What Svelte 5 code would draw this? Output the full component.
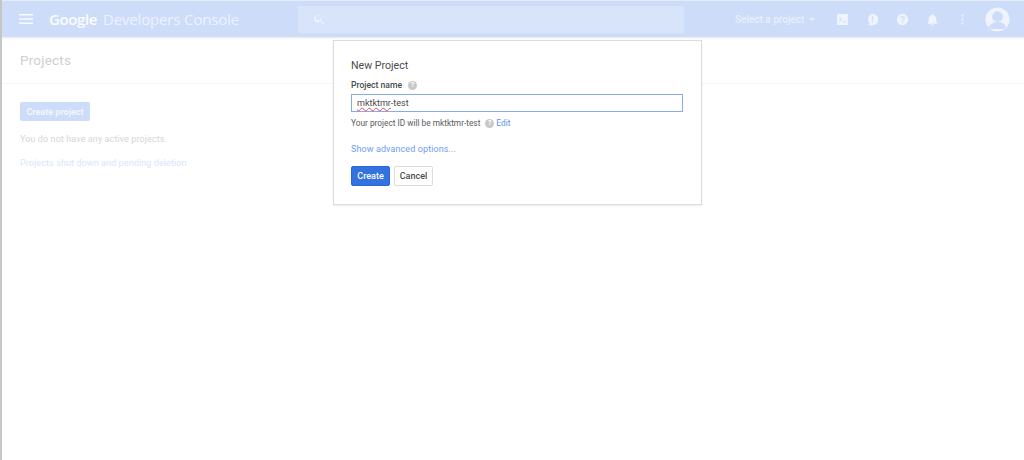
<script>
  const actions = ['terminal', 'feedback', 'help', 'bell', 'more'];
</script>

<div class="page">
  <header class="bar">
    <svg class="menu" viewBox="0 0 14 10" aria-hidden="true"><path d="M0 0h14v1.5H0zM0 4.200h14v1.500H0zM0 8.500h14V10H0z" /></svg>
    <div class="brand"><span class="google">Google</span><span class="product">Developers Console</span></div>
    <div class="search">
      <svg viewBox="0 0 24 24" aria-hidden="true"><path d="M15.500 14h-.8l-.3-.3A6.500 6.500 0 1 0 14 14.400l.3.3v.8l5 5 1.500-1.500-5-5zm-6 0a4.500 4.500 0 1 1 0-9 4.500 4.500 0 0 1 0 9z" /></svg>
    </div>
    <div class="picker">Select a project<span class="caret"></span></div>
    <div class="actions">
      {#each actions as a}
        <svg class="action" viewBox="0 0 24 24" aria-hidden="true">
          {#if a === 'terminal'}
            <path fill-rule="evenodd" d="M2 2h20v20H2zM6 9.500l3.500 2.500L6 14.500V16.500l6-4.500-6-4.500zM12.500 15v2h6v-2z" />
          {:else if a === 'feedback'}
            <path fill-rule="evenodd" d="M12 1.500a10.500 10.500 0 0 1 0 21H4.500l2-3.500A10.500 10.500 0 0 1 12 1.500zM10.700 6v8h2.600V6zM10.700 15.500v2.600h2.600v-2.600z" />
          {:else if a === 'help'}
            <path fill-rule="evenodd" d="M12 1.500a10.500 10.500 0 1 1 0 21 10.500 10.500 0 0 1 0-21zM10.800 16v2.400h2.400V16zM12 5.500a4.300 4.300 0 0 0-4.300 4.300h2.300a2 2 0 1 1 4 0c0 2-3.200 1.900-3.200 5.200h2.400c0-2.400 3.100-2.700 3.100-5.200A4.300 4.300 0 0 0 12 5.500z" />
          {:else if a === 'bell'}
            <path d="M12 23a2.200 2.200 0 0 0 2.200-2.200H9.800A2.200 2.200 0 0 0 12 23zm7-6.500v-5.500c0-3.400-2.200-6.100-5.500-6.800V3.500a1.500 1.500 0 0 0-3 0v.7C7.200 4.900 5 7.600 5 11v5.500l-2.500 2.500v1h19v-1z" />
          {:else}
            <path d="M10.300 3h3.400v3.400h-3.400zM10.300 10.300h3.400v3.400h-3.400zM10.300 17.600h3.400V21h-3.400z" />
          {/if}
        </svg>
      {/each}
    </div>
    <svg class="avatar" viewBox="0 0 26 26" aria-hidden="true">
      <circle cx="13" cy="13" r="12.500" fill="#eef3fd" />
      <circle cx="13" cy="10" r="5.500" fill="#cddcf8" />
      <path d="M4 21c1.500-4 5-5.500 9-5.500s7.500 1.500 9 5.500l-2 2H6z" fill="#cddcf8" />
    </svg>
  </header>

  <div class="title"><h1>Projects</h1></div>

  <main class="content">
    <button class="create-project">Create project</button>
    <p class="none">You do not have any active projects.</p>
    <a class="pending" href="#top">Projects shut down and pending deletion</a>
  </main>

  <section class="dialog">
    <h2>New Project</h2>
    <div class="label"><b>Project name</b><span class="hint">?</span></div>
    <div class="input"><span class="squiggle">mktktmr</span>-test</div>
    <div class="id">Your project ID will be mktktmr-test<span class="hint second">?</span><a href="#top">Edit</a></div>
    <a class="advanced" href="#top">Show advanced options...</a>
    <div class="buttons">
      <button class="primary">Create</button>
      <button class="cancel">Cancel</button>
    </div>
  </section>
</div>

<style>
  :global(body) {
    margin: 0;
    background: #fff;
  }
  .page {
    position: relative;
    box-sizing: border-box;
    width: 1024px;
    height: 460px;
    overflow: hidden;
    padding-top: 1px;
    background: linear-gradient(#e6eefc 1px, #fff 1px);
    border-left: 2px solid #c6c6c6;
    font-family: "Roboto", "Liberation Sans", sans-serif;
  }
  .bar {
    display: flex;
    align-items: center;
    height: 36px;
    background: #cddcf8;
    box-shadow: 0 1px 2px rgba(0, 0, 0, 0.1);
  }
  .menu {
    width: 14px;
    height: 10px;
    margin-left: 17px;
    fill: #f8faff;
  }
  .brand {
    display: flex;
    gap: 6px;
    margin-left: 16px;
    width: 249px;
    font-family: "Open Sans", sans-serif;
    font-size: 15px;
    white-space: nowrap;
  }
  .google {
    color: #fafcff;
    font-weight: 600;
    letter-spacing: -0.4px;
  }
  .product {
    color: #edf2fd;
    letter-spacing: -0.15px;
  }
  .search {
    display: flex;
    align-items: center;
    width: 386px;
    height: 27px;
    background: #d8e4fa;
  }
  .search svg {
    width: 13px;
    height: 13px;
    margin-left: 15px;
    fill: #f1f5fe;
  }
  .picker {
    display: flex;
    align-items: center;
    margin-left: 51px;
    width: 94px;
    color: #e8effc;
    font-size: 10px;
    font-weight: 500;
    white-space: nowrap;
  }
  .caret {
    margin-left: 5px;
    border: 3px solid transparent;
    border-top: 3px solid #e8effc;
    border-bottom: 0;
  }
  .actions {
    display: flex;
    gap: 17px;
    margin-left: 7px;
  }
  .action {
    width: 13px;
    height: 13px;
    fill: #f0f4fe;
  }
  .avatar {
    width: 25px;
    height: 25px;
    margin-left: 16px;
  }
  .title {
    box-sizing: border-box;
    height: 47px;
    padding: 16px 0 0 18px;
    border-bottom: 1px solid #f4f4f4;
  }
  h1 {
    margin: 0;
    color: #cfcfcf;
    font-size: 13.500px;
    font-weight: 400;
    line-height: 14px;
    letter-spacing: 0.2px;
  }
  .content {
    display: flex;
    flex-direction: column;
    align-items: flex-start;
    padding: 18px 18px;
  }
  .create-project {
    box-sizing: border-box;
    width: 70px;
    height: 19px;
    padding: 0;
    border: 0;
    border-radius: 2px;
    background: #cddcf8;
    color: #f2f6fe;
    font: 700 9px "Roboto", sans-serif;
  }
  .none {
    margin: 13px 0 0;
    color: #d6d6d6;
    font-size: 9px;
    line-height: 11px;
    letter-spacing: 0.1px;
  }
  .pending {
    margin-top: 13px;
    color: #d8e4fb;
    font-size: 9px;
    line-height: 11px;
    letter-spacing: 0.1px;
    text-decoration: none;
  }
  .dialog {
    position: absolute;
    left: 331px;
    top: 40px;
    box-sizing: border-box;
    width: 369px;
    height: 165px;
    padding: 19px 17px 0;
    background: #fff;
    border: 1px solid #dcdcdc;
    box-shadow: 0 1px 2px rgba(0, 0, 0, 0.08);
  }
  h2 {
    margin: 0;
    color: #4a4a4a;
    font-size: 10.600px;
    font-weight: 400;
    line-height: 12px;
  }
  .label {
    display: flex;
    align-items: center;
    margin-top: 8px;
    color: #4a4a4a;
    font-size: 8.600px;
    line-height: 11px;
  }
  .label b {
    font-weight: 500;
  }
  .hint {
    display: inline-flex;
    align-items: center;
    justify-content: center;
    width: 9px;
    height: 9px;
    margin-left: 6px;
    border-radius: 50%;
    background: #c8c8c8;
    color: #fff;
    font-size: 7px;
    font-weight: 700;
  }
  .input {
    box-sizing: border-box;
    width: 332px;
    height: 18px;
    margin-top: 3px;
    padding-left: 5px;
    border: 1px solid #88aaf5;
    color: #4a4a4a;
    font-size: 9px;
    line-height: 16px;
  }
  .squiggle {
    text-decoration: underline wavy #e0503f 0.7px;
    text-underline-offset: 1px;
  }
  .id {
    display: flex;
    align-items: center;
    margin-top: 6px;
    color: #5a5a5a;
    font-size: 8.300px;
    line-height: 11px;
    white-space: nowrap;
  }
  .id a {
    margin-left: 2px;
    color: #5b8ff0;
    text-decoration: none;
  }
  .second {
    margin-left: 5px;
  }
  .advanced {
    display: block;
    margin-top: 15px;
    color: #6f9df2;
    font-size: 9px;
    line-height: 11px;
    text-decoration: none;
    letter-spacing: 0.1px;
  }
  .buttons {
    display: flex;
    gap: 4px;
    margin-top: 11px;
  }
  .buttons button {
    box-sizing: border-box;
    height: 20px;
    padding: 0;
    border-radius: 2px;
    font: 500 9px "Roboto", sans-serif;
  }
  .primary {
    width: 39px;
    border: 1px solid #2a66d6;
    background: #3372df;
    color: #fff;
  }
  .cancel {
    width: 39px;
    border: 1px solid #dcdcdc;
    background: #fff;
    color: #4a4a4a;
  }
</style>
